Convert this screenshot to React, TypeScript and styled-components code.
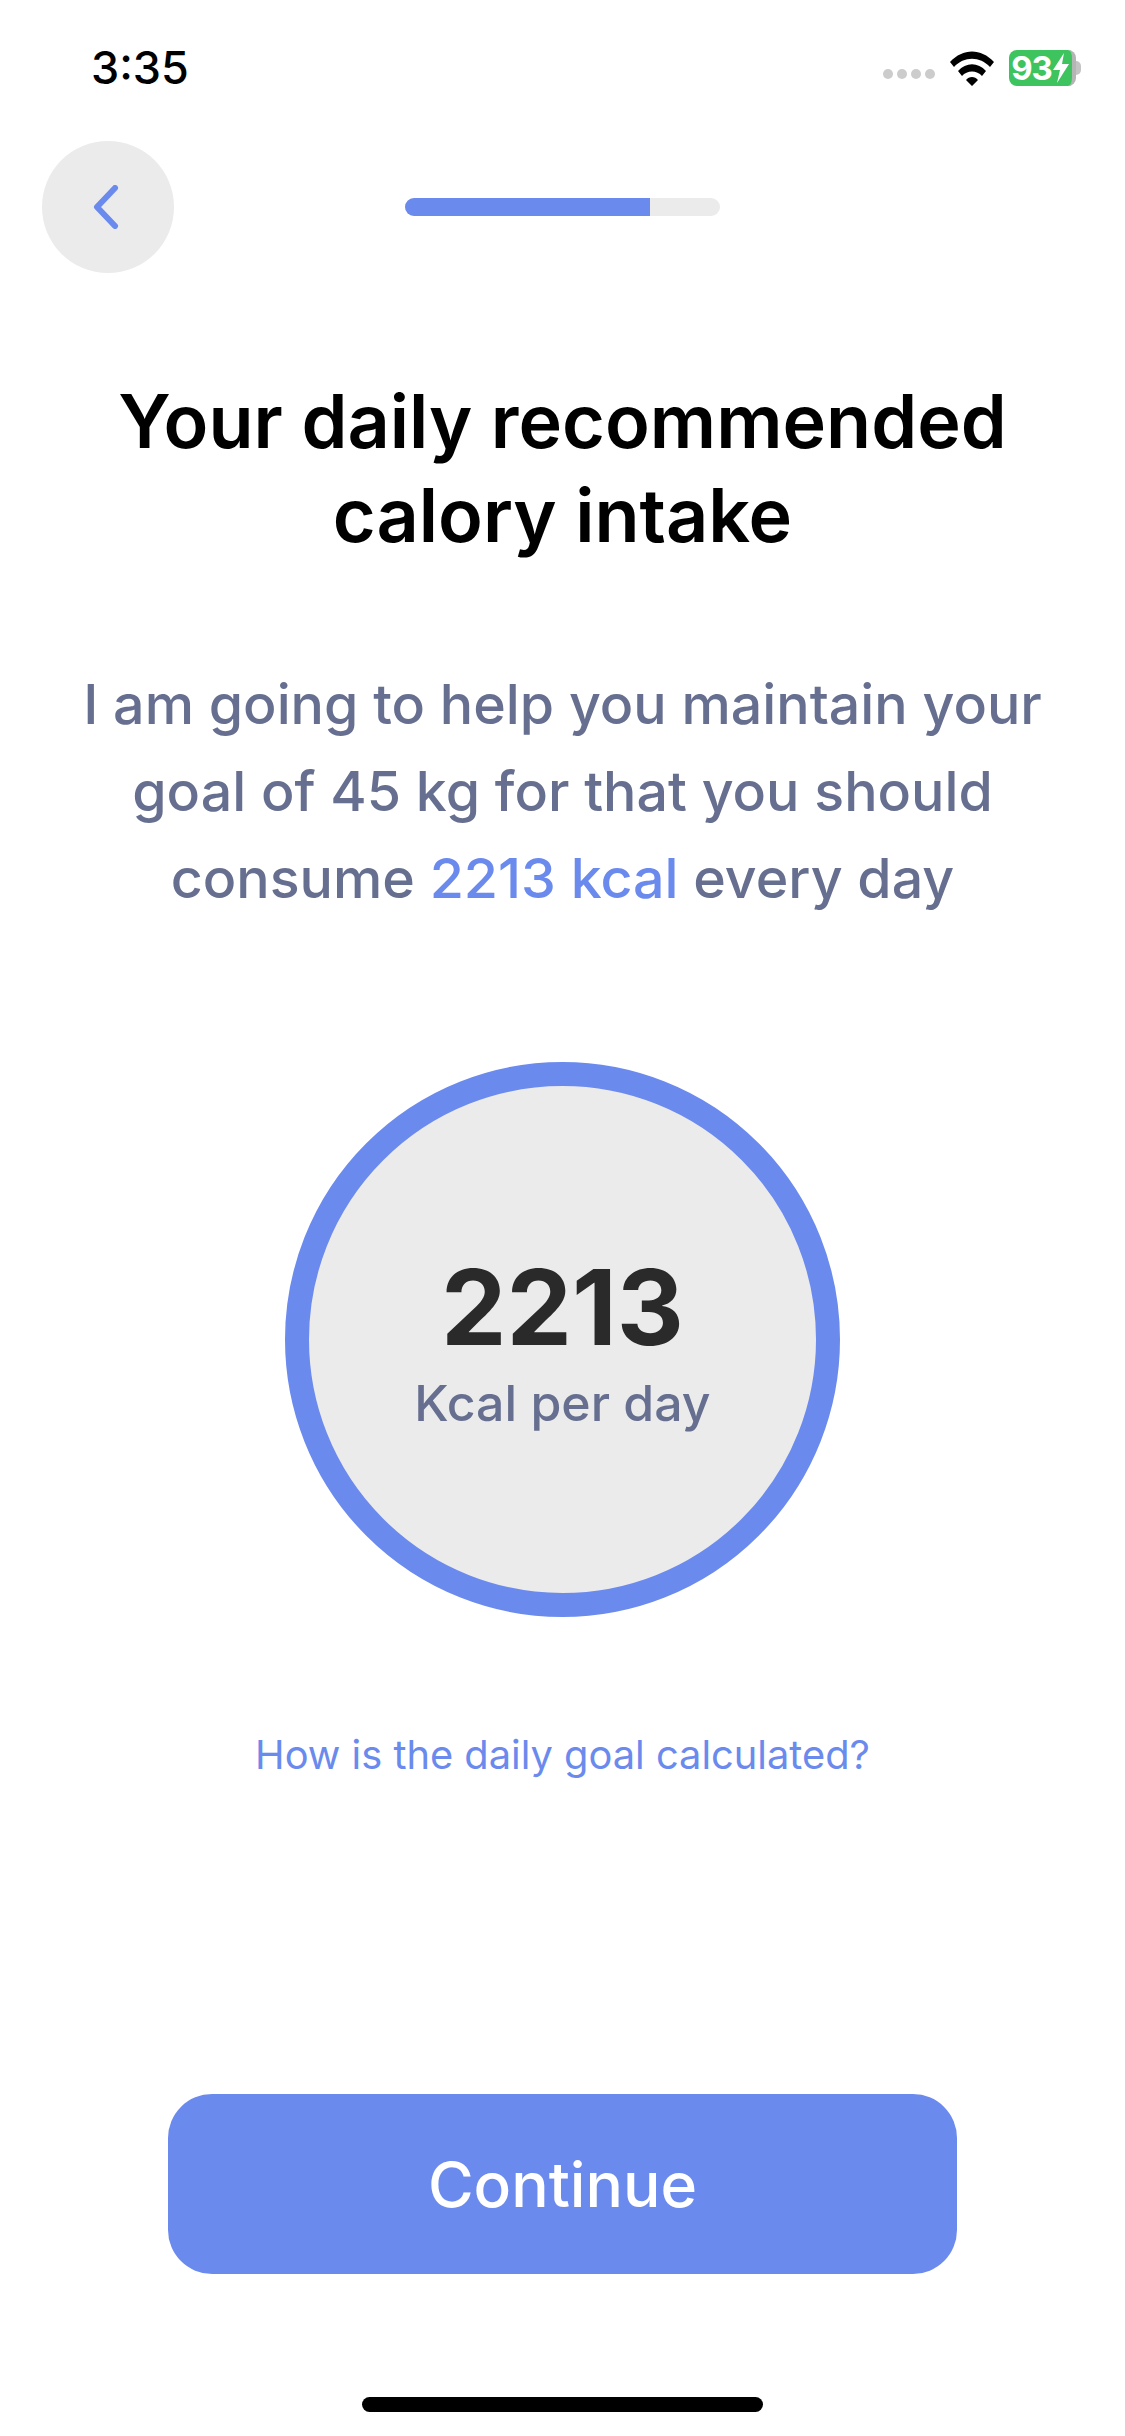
import styled, { createGlobalStyle } from 'styled-components';

const GlobalStyle = createGlobalStyle`
	html, body {
		margin: 0;
		padding: 0;
		background: #ffffff;
	}
	* {
		box-sizing: border-box;
	}
`;

const App = () => {
	return (
		<>
			<GlobalStyle />
			<Page>
				<StatusBar>
					<Time>3:35</Time>
					<StatusIcons>
						<SignalDots>
							<i />
							<i />
							<i />
							<i />
						</SignalDots>
						<svg width='46' height='36' viewBox='0 0 46 36'>
							<path
								d='M1 12 L5 17 C15 6 31 6 41 17 L45 12 C32 -2 14 -2 1 12 Z M9 21 L13 26 C18 20 28 20 33 26 L37 21 C29 12 17 12 9 21 Z M17 30 L23 36 L29 30 C26 26 20 26 17 30 Z'
								fill='#000000'
							/>
						</svg>
						<Battery>
							<BatteryBody>
								<span>93</span>
								<svg width='18' height='32' viewBox='0 0 18 32'>
									<path d='M12 1 L1 18 H8 L5 31 L17 12 H10 Z' fill='#ffffff' />
								</svg>
							</BatteryBody>
							<BatteryCap />
						</Battery>
					</StatusIcons>
				</StatusBar>
				<TopRow>
					<BackButton>
						<svg width='30' height='44' viewBox='0 0 30 44'>
							<path
								d='M25 3 L7 22 L25 41'
								fill='none'
								stroke='#6b8aed'
								strokeWidth='6'
								strokeLinecap='round'
								strokeLinejoin='round'
							/>
						</svg>
					</BackButton>
					<Progress>
						<ProgressFill />
					</Progress>
				</TopRow>
				<Title>
					Your daily recommended
					<br />
					calory intake
				</Title>
				<Description>
					I am going to help you maintain your
					<br />
					goal of 45 kg for that you should
					<br />
					consume <Accent>2213 kcal</Accent> every day
				</Description>
				<Ring>
					<Amount>2213</Amount>
					<Unit>Kcal per day</Unit>
				</Ring>
				<HelpLink>How is the daily goal calculated?</HelpLink>
				<ContinueButton>Continue</ContinueButton>
				<HomeIndicator />
			</Page>
		</>
	);
};
export default App;

const Page = styled.div`
	display: flex;
	flex-direction: column;
	align-items: center;
	width: 1125px;
	height: 2436px;
	overflow: hidden;
	background: #ffffff;
	font-family: Inter, 'Noto Sans', sans-serif;
`;

const StatusBar = styled.div`
	display: flex;
	justify-content: space-between;
	align-items: center;
	width: 100%;
	height: 141px;
	padding: 0 44px 6px 91px;
`;

const Time = styled.span`
	font-size: 45px;
	font-weight: 500;
	color: #000000;
`;

const StatusIcons = styled.div`
	display: flex;
	align-items: center;
	gap: 14px;
`;

const SignalDots = styled.div`
	display: flex;
	gap: 4px;
	margin-top: 12px;
	i {
		display: block;
		width: 10px;
		height: 10px;
		border-radius: 50%;
		background: #cccccc;
	}
`;

const Battery = styled.div`
	display: flex;
	align-items: center;
`;

const BatteryBody = styled.div`
	display: flex;
	align-items: center;
	justify-content: center;
	width: 67px;
	height: 36px;
	border-radius: 8px;
	border-right: 4px solid #b5b5b5;
	background: #3ec45e;
	color: #ffffff;
	font-size: 33px;
	font-weight: 700;
	letter-spacing: -1px;
`;

const BatteryCap = styled.div`
	width: 5px;
	height: 14px;
	border-radius: 0 5px 5px 0;
	background: #c4c4c4;
`;

const TopRow = styled.div`
	display: flex;
	align-items: center;
	width: 100%;
	height: 132px;
	padding-left: 42px;
`;

const BackButton = styled.div`
	display: flex;
	align-items: center;
	justify-content: center;
	flex: none;
	width: 132px;
	height: 132px;
	padding-right: 6px;
	border-radius: 50%;
	background: #ebebeb;
`;

const Progress = styled.div`
	width: 315px;
	height: 18px;
	margin-left: 231px;
	border-radius: 9px;
	overflow: hidden;
	background: #ebebeb;
`;

const ProgressFill = styled.div`
	width: 245px;
	height: 100%;
	background: #6b8aed;
`;

const Title = styled.h1`
	margin: 102px 0 0;
	font-size: 73.7px;
	font-weight: 600;
	line-height: 94px;
	text-align: center;
	color: #000000;
`;

const Description = styled.p`
	margin: 97px 0 0;
	font-size: 55.5px;
	font-weight: 450;
	line-height: 87px;
	text-align: center;
	color: #666f8f;
`;

const Accent = styled.span`
	color: #6b8aed;
`;

const Ring = styled.div`
	display: flex;
	flex-direction: column;
	align-items: center;
	justify-content: center;
	flex: none;
	width: 555px;
	height: 555px;
	margin-top: 141px;
	padding-top: 5px;
	border: 24px solid #6b8aed;
	border-radius: 50%;
	background: #ebebeb;
`;

const Amount = styled.div`
	font-size: 104px;
	font-weight: 700;
	line-height: 110px;
	color: #2a2a2a;
`;

const Unit = styled.div`
	margin-top: 11px;
	font-size: 50px;
	font-weight: 450;
	line-height: 60px;
	color: #666f8f;
`;

const HelpLink = styled.div`
	margin-top: 114px;
	font-size: 39.8px;
	line-height: 48px;
	color: #6b8aed;
`;

const ContinueButton = styled.div`
	display: flex;
	align-items: center;
	justify-content: center;
	flex: none;
	width: 789px;
	height: 180px;
	margin-top: 315px;
	border-radius: 44px;
	background: #6b8aed;
	color: #ffffff;
	font-size: 62.3px;
	font-weight: 450;
`;

const HomeIndicator = styled.div`
	flex: none;
	width: 401px;
	height: 15px;
	margin-top: 123px;
	border-radius: 8px;
	background: #000000;
`;
